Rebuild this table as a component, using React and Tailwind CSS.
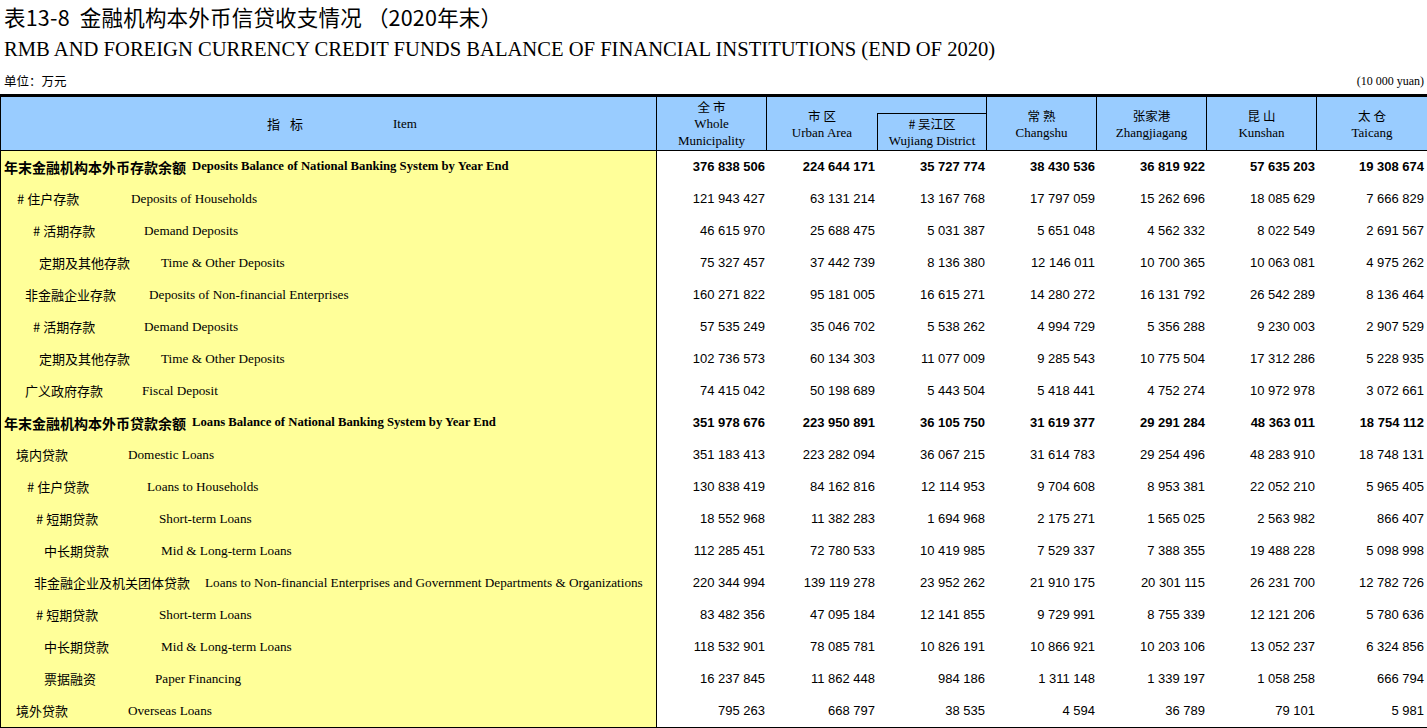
import React from "react";

const CN = "font-['Noto_Sans_CJK_SC',sans-serif]";
const SERIF = "font-['Liberation_Serif','Noto_Sans_CJK_SC',serif]";
const NUM = "font-['Liberation_Sans',sans-serif]";

const rows = [
  { cn: "年末金融机构本外币存款余额", en: "Deposits Balance of National Banking System by Year End", bold: true, pl: "pl-[3px]", w: "w-[188px]",
    v: ["376 838 506", "224 644 171", "35 727 774", "38 430 536", "36 819 922", "57 635 203", "19 308 674"] },
  { cn: "# 住户存款", en: "Deposits of Households", pl: "pl-[16px]", w: "w-[114px]",
    v: ["121 943 427", "63 131 214", "13 167 768", "17 797 059", "15 262 696", "18 085 629", "7 666 829"] },
  { cn: "# 活期存款", en: "Demand Deposits", pl: "pl-[32px]", w: "w-[111px]",
    v: ["46 615 970", "25 688 475", "5 031 387", "5 651 048", "4 562 332", "8 022 549", "2 691 567"] },
  { cn: "定期及其他存款", en: "Time & Other Deposits", pl: "pl-[38px]", w: "w-[122px]",
    v: ["75 327 457", "37 442 739", "8 136 380", "12 146 011", "10 700 365", "10 063 081", "4 975 262"] },
  { cn: "非金融企业存款", en: "Deposits of Non-financial Enterprises", pl: "pl-[24px]", w: "w-[124px]",
    v: ["160 271 822", "95 181 005", "16 615 271", "14 280 272", "16 131 792", "26 542 289", "8 136 464"] },
  { cn: "# 活期存款", en: "Demand Deposits", pl: "pl-[32px]", w: "w-[111px]",
    v: ["57 535 249", "35 046 702", "5 538 262", "4 994 729", "5 356 288", "9 230 003", "2 907 529"] },
  { cn: "定期及其他存款", en: "Time & Other Deposits", pl: "pl-[38px]", w: "w-[122px]",
    v: ["102 736 573", "60 134 303", "11 077 009", "9 285 543", "10 775 504", "17 312 286", "5 228 935"] },
  { cn: "广义政府存款", en: "Fiscal Deposit", pl: "pl-[24px]", w: "w-[117px]",
    v: ["74 415 042", "50 198 689", "5 443 504", "5 418 441", "4 752 274", "10 972 978", "3 072 661"] },
  { cn: "年末金融机构本外币贷款余额", en: "Loans Balance of National Banking System by Year End", bold: true, pl: "pl-[3px]", w: "w-[188px]",
    v: ["351 978 676", "223 950 891", "36 105 750", "31 619 377", "29 291 284", "48 363 011", "18 754 112"] },
  { cn: "境内贷款", en: "Domestic Loans", pl: "pl-[15px]", w: "w-[112px]",
    v: ["351 183 413", "223 282 094", "36 067 215", "31 614 783", "29 254 496", "48 283 910", "18 748 131"] },
  { cn: "# 住户贷款", en: "Loans to Households", pl: "pl-[26px]", w: "w-[120px]",
    v: ["130 838 419", "84 162 816", "12 114 953", "9 704 608", "8 953 381", "22 052 210", "5 965 405"] },
  { cn: "# 短期贷款", en: "Short-term Loans", pl: "pl-[35px]", w: "w-[123px]",
    v: ["18 552 968", "11 382 283", "1 694 968", "2 175 271", "1 565 025", "2 563 982", "866 407"] },
  { cn: "中长期贷款", en: "Mid & Long-term Loans", pl: "pl-[43px]", w: "w-[117px]",
    v: ["112 285 451", "72 780 533", "10 419 985", "7 529 337", "7 388 355", "19 488 228", "5 098 998"] },
  { cn: "非金融企业及机关团体贷款", en: "Loans to Non-financial Enterprises and Government Departments & Organizations", pl: "pl-[33px]", w: "w-[171px]",
    v: ["220 344 994", "139 119 278", "23 952 262", "21 910 175", "20 301 115", "26 231 700", "12 782 726"] },
  { cn: "# 短期贷款", en: "Short-term Loans", pl: "pl-[35px]", w: "w-[123px]",
    v: ["83 482 356", "47 095 184", "12 141 855", "9 729 991", "8 755 339", "12 121 206", "5 780 636"] },
  { cn: "中长期贷款", en: "Mid & Long-term Loans", pl: "pl-[43px]", w: "w-[117px]",
    v: ["118 532 901", "78 085 781", "10 826 191", "10 866 921", "10 203 106", "13 052 237", "6 324 856"] },
  { cn: "票据融资", en: "Paper Financing", pl: "pl-[43px]", w: "w-[111px]",
    v: ["16 237 845", "11 862 448", "984 186", "1 311 148", "1 339 197", "1 058 258", "666 794"] },
  { cn: "境外贷款", en: "Overseas Loans", pl: "pl-[15px]", w: "w-[112px]",
    v: ["795 263", "668 797", "38 535", "4 594", "36 789", "79 101", "5 981"] },
];

function HeadCell({ cn, en, border = true }) {
  return (
    <div className={`flex flex-col items-center justify-center bg-[#99ccff] ${border ? "border-r border-black" : ""} leading-[17px]`}>
      <div className={`${CN} text-[12.5px]`}>{cn}</div>
      {en.map((t) => (
        <div key={t} className={`${SERIF} text-[13px]`}>{t}</div>
      ))}
    </div>
  );
}

export default function App() {
  return (
    <div className="w-[1427px] h-[728px] overflow-hidden bg-white text-black">
      {/* Titles */}
      <div className={`${CN} h-[35px] flex items-center pl-[4px] text-[21.5px] tracking-[0.2px] whitespace-nowrap`}>
        表13-8&nbsp;&nbsp;金融机构本外币信贷收支情况 （2020年末）
      </div>
      <div className={`${SERIF} h-[28px] flex items-center pl-[4px] text-[20.6px] whitespace-nowrap`}>
        RMB AND FOREIGN CURRENCY CREDIT FUNDS BALANCE OF FINANCIAL INSTITUTIONS (END OF 2020)
      </div>
      <div className="h-[31px] flex items-center justify-between pl-[4px] pr-[3px] pt-[5px]">
        <span className={`${CN} text-[12.5px]`}>单位：万元</span>
        <span className={`${SERIF} text-[12px]`}>(10 000 yuan)</span>
      </div>

      {/* Table */}
      <div className="border-t-[3px] border-black">
        {/* Header */}
        <div className="grid grid-cols-[657px_110px_110px_110px_110px_110px_110px_1fr] h-[54px] border-b border-black">
          <div className="flex items-center bg-[#99ccff] border-l border-r border-black">
            <span className={`${CN} text-[13px] ml-[266px]`}>指</span>
            <span className={`${CN} text-[13px] ml-[10px]`}>标</span>
            <span className={`${SERIF} text-[13px] ml-[90px]`}>Item</span>
          </div>
          <HeadCell cn="全 市" en={["Whole", "Municipality"]} />
          <HeadCell cn="市 区" en={["Urban Area"]} border={false} />
          <div className="flex flex-col bg-[#99ccff] border-r border-black">
            <div className="h-[16px]" />
            <div className="flex-1 flex flex-col items-center justify-center border-t border-l border-black leading-[17px]">
              <div className={`${CN} text-[12.5px]`}># 吴江区</div>
              <div className={`${SERIF} text-[13px]`}>Wujiang District</div>
            </div>
          </div>
          <HeadCell cn="常 熟" en={["Changshu"]} />
          <HeadCell cn="张家港" en={["Zhangjiagang"]} />
          <HeadCell cn="昆 山" en={["Kunshan"]} />
          <HeadCell cn="太 仓" en={["Taicang"]} border={false} />
        </div>

        {/* Body */}
        <div className="border-b-[3px] border-black">
          {rows.map((r, i) => (
            <div key={i} className="grid grid-cols-[657px_110px_110px_110px_110px_110px_110px_1fr] h-[32px]">
              <div className={`flex items-center bg-[#ffff99] border-l border-r border-black whitespace-nowrap ${r.pl}`}>
                <span className={`${CN} shrink-0 ${r.w} ${r.bold ? "font-bold text-[14px]" : "text-[13px]"}`}>{r.cn}</span>
                <span className={`${SERIF} ${r.bold ? "font-bold text-[12.7px]" : "text-[13.2px]"}`}>{r.en}</span>
              </div>
              {r.v.map((n, j) => (
                <div
                  key={j}
                  className={`${NUM} flex items-center justify-end text-[13px] whitespace-nowrap ${j === 6 ? "pr-[3px]" : "pr-[2px]"} ${r.bold ? "font-bold" : ""}`}
                >
                  {n}
                </div>
              ))}
            </div>
          ))}
        </div>
      </div>
    </div>
  );
}
